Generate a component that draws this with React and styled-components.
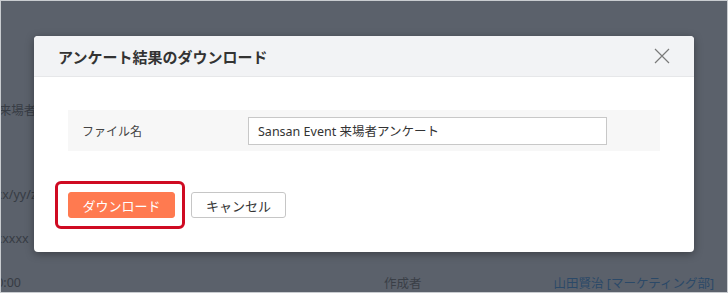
import React from "react"
import styled, { createGlobalStyle } from "styled-components"

const Global = createGlobalStyle`
  html, body {
    margin: 0;
    padding: 0;
    background: #5b616b;
  }
  * { box-sizing: border-box; }
`

const font = `"Noto Sans", "Noto Sans CJK JP", sans-serif`

const Screen = styled.div`
  position: relative;
  width: 728px;
  height: 293px;
  overflow: hidden;
  background: #5b616b;
  border: 1px solid #c9ccd0;
  font-family: ${font};
`

const Page = styled.div`
  padding-top: 86px;
  margin-left: -12px;
`

const Row = styled.div`
  display: grid;
  grid-template-columns: 395px 1fr auto;
  align-items: center;
  height: ${p => p.h || 44}px;
  padding-right: 13px;
  font-size: 12.5px;
  color: #373c44;
  white-space: nowrap;
`

const Label = styled.span`
  color: #3a3f47;
`

const Author = styled.span`
  color: #2b4968;
`

const Overlay = styled.div`
  position: absolute;
  inset: 0;
  padding: 35px 33px 0 33px;
`

const Modal = styled.div`
  width: 660px;
  background: #fff;
  border-radius: 4px;
  box-shadow: 0 2px 8px rgba(0, 0, 0, 0.35);
  overflow: hidden;
`

const Header = styled.div`
  display: flex;
  align-items: center;
  justify-content: space-between;
  height: 41px;
  padding: 0 24px 0 24px;
  background: #f2f3f5;
  border-bottom: 1px solid #e6e7e9;
`

const Title = styled.h2`
  margin: 0;
  font-size: 15px;
  font-weight: 700;
  color: #333;
`

const Close = styled.button`
  display: flex;
  padding: 0;
  border: 0;
  background: none;
  cursor: pointer;
`

const Body = styled.div`
  padding: 33px 34px 34px 34px;
`

const Field = styled.div`
  display: grid;
  grid-template-columns: 166px 359px;
  align-items: center;
  height: 41px;
  padding-left: 14px;
  background: #f7f7f7;
  font-size: 12px;
  color: #444;
`

const Input = styled.input`
  height: 28px;
  padding: 0 9px;
  border: 1px solid #c8c8c8;
  border-radius: 0;
  background: #fff;
  font-family: ${font};
  font-size: 12.5px;
  color: #333;
  outline: none;
`

const Footer = styled.div`
  display: flex;
  gap: 16px;
  margin-top: 41px;
`

const Highlight = styled.span`
  position: relative;
  display: inline-flex;

  &::after {
    content: "";
    position: absolute;
    top: -11px;
    bottom: -11px;
    left: -13px;
    right: -10px;
    border: 3px solid #cf0a22;
    border-radius: 6px;
    pointer-events: none;
  }
`

const Button = styled.button`
  height: 26px;
  width: ${p => p.w}px;
  padding: 0;
  border-radius: 3px;
  font-family: ${font};
  font-size: 13px;
  cursor: pointer;
  border: 1px solid ${p => (p.primary ? "#ff7a50" : "#c6c6c6")};
  background: ${p => (p.primary ? "#ff7a50" : "#fff")};
  color: ${p => (p.primary ? "#fff" : "#333")};
`

const CloseIcon = () => (
  <svg width="16" height="16" viewBox="0 0 16 16">
    <path d="M1 1 L15 15 M15 1 L1 15" stroke="#7a7a7a" strokeWidth="1.2" fill="none" />
  </svg>
)

const App = () => (
  <>
    <Global />
    <Screen>
      <Page>
        <Row><span>x 来場者アンケート</span></Row>
        <Row h={41}><span /></Row>
        <Row><span>xxx/yy/zz</span></Row>
        <Row><span>xxxxxx</span></Row>
        <Row h={45}>
          <span>10:00</span>
          <Label>作成者</Label>
          <Author>山田賢治 [マーケティング部]</Author>
        </Row>
      </Page>

      <Overlay>
        <Modal>
          <Header>
            <Title>アンケート結果のダウンロード</Title>
            <Close aria-label="閉じる"><CloseIcon /></Close>
          </Header>
          <Body>
            <Field>
              <span>ファイル名</span>
              <Input defaultValue="Sansan Event 来場者アンケート" />
            </Field>
            <Footer>
              <Highlight>
                <Button primary w={107}>ダウンロード</Button>
              </Highlight>
              <Button w={95}>キャンセル</Button>
            </Footer>
          </Body>
        </Modal>
      </Overlay>
    </Screen>
  </>
)

export default App
